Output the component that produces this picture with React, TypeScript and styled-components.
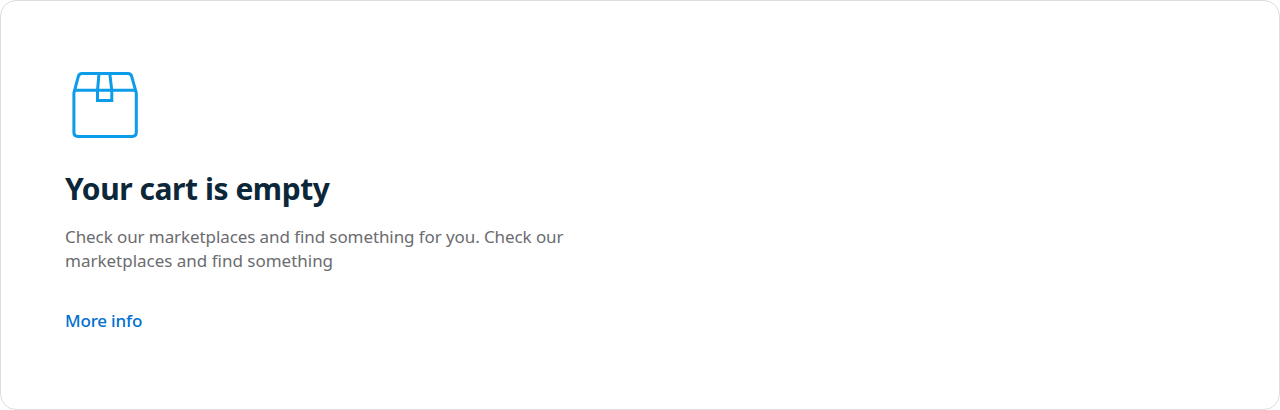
import React from 'react';
import styled, { createGlobalStyle } from 'styled-components';

const GlobalStyle = createGlobalStyle`
  *, *::before, *::after { box-sizing: border-box; }
  body { margin: 0; background: #fff; }
`;

const Card = styled.section`
  display: flex;
  flex-direction: column;
  align-items: flex-start;
  height: 410px;
  padding: 64px;
  border: 1px solid #dddddd;
  border-radius: 16px;
  background: #fff;
  font-family: 'Noto Sans', 'Open Sans', sans-serif;
`;

const BoxIcon = styled.svg`
  display: block;
  width: 80px;
  height: 80px;
  margin-bottom: 24px;
  fill: none;
  stroke: #0b9cea;
  stroke-width: 3;
  stroke-linejoin: round;
`;

const Title = styled.h1`
  margin: 0 0 16px;
  color: #0b2739;
  font-size: 30px;
  font-weight: 700;
  line-height: 40px;
  letter-spacing: -0.45px;
  white-space: nowrap;
`;

const Description = styled.p`
  width: 512px;
  margin: 0;
  color: #6b6c6f;
  font-size: 17px;
  line-height: 24px;
`;

const Line = styled.span<{ $spacing: string }>`
  display: block;
  white-space: nowrap;
  letter-spacing: ${({ $spacing }) => $spacing};
`;

const Link = styled.a`
  margin-top: 36px;
  color: #0070d2;
  font-size: 17px;
  font-weight: 500;
  line-height: 24px;
  letter-spacing: -0.18px;
  text-decoration: none;
`;

export default function App() {
  return (
    <>
      <GlobalStyle />
      <Card>
        <BoxIcon viewBox="0 0 80 80" aria-hidden="true">
          <path d="M8.9 28 13.4 11.2Q14.2 8.6 16.9 8.6H63.1Q65.8 8.6 66.6 11.2L71.3 28V67.5Q71.3 71.4 67.4 71.4H12.8Q8.9 71.4 8.9 67.5Z" />
          <path d="M9.3 25.2H70.9" />
          <path d="M34 8.8 32.5 25.5V35.5H46.8V25.5L44.8 8.8" strokeLinejoin="miter" />
        </BoxIcon>
        <Title>Your cart is empty</Title>
        <Description>
          <Line $spacing="-0.09px">Check our marketplaces and find something for you. Check our</Line>
          <Line $spacing="-0.01px">marketplaces and find something</Line>
        </Description>
        <Link>More info</Link>
      </Card>
    </>
  );
}
